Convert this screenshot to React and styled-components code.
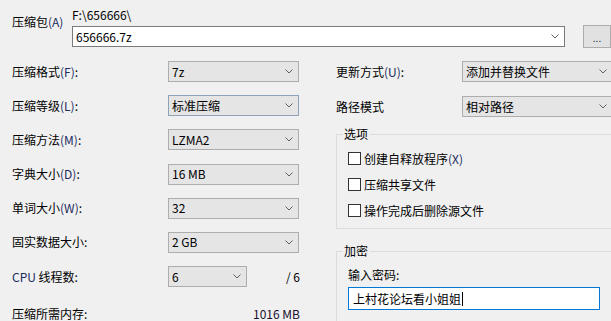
import React from "react";
import styled, { createGlobalStyle } from "styled-components";

const GlobalStyle = createGlobalStyle`
  html, body { margin: 0; padding: 0; background: #f0f0f0; }
  body {
    font-family: "Noto Sans CJK SC", "Noto Sans", sans-serif;
    font-size: 12px;
    line-height: 14px;
    color: #000;
  }
  * { box-sizing: border-box; }
`;

const Dialog = styled.div`
  width: 611px;
  height: 321px;
  overflow: hidden;
  padding: 8px 0 0 12px;
  background: #f0f0f0;
`;

const ArchiveSection = styled.div`
  display: grid;
  grid-template-columns: 60px 600px;
`;

const ArchiveLabel = styled.div`
  padding-top: 7px;
  white-space: nowrap;
`;

const PathText = styled.div`
  height: 17px;
  white-space: nowrap;
`;

const InputRow = styled.div`
  display: flex;
  align-items: center;
  gap: 18px;
`;

const NameInput = styled.div`
  width: 493px;
  height: 21px;
  flex: none;
  background: #fff;
  border: 1px solid #7a7a7a;
  display: flex;
  align-items: center;
  justify-content: space-between;
  padding: 0 5px 0 3px;
`;

const BrowseButton = styled.div`
  width: 28px;
  height: 23px;
  flex: none;
  background: #e1e1e1;
  border: 1px solid #adadad;
  display: flex;
  align-items: center;
  justify-content: center;
  font-size: 10px;
  line-height: 10px;
  padding-top: 2px;
  color: #202040;
`;

const Main = styled.div`
  display: grid;
  grid-template-columns: 288px 320px;
  column-gap: 36px;
  margin-top: 13px;
`;

const LeftColumn = styled.div`
  display: flex;
  flex-direction: column;
  gap: 13.2px;
`;

const FormRow = styled.div`
  display: grid;
  grid-template-columns: ${(p) => p.$labelWidth || 156}px ${(p) => p.$fieldWidth || 131}px 1fr;
  align-items: center;
  height: 21px;
  white-space: nowrap;
`;

const Label = styled.span`
  white-space: nowrap;
`;

const Mnemonic = styled.span`
  color: #1b2c5e;
`;

const Combo = styled.div`
  height: ${(p) => p.$height || 21}px;
  background: #e5e5e5;
  border: 1px solid ${(p) => (p.$focused ? "#8fa3b8" : "#adadad")};
  display: flex;
  align-items: center;
  justify-content: space-between;
  padding: 0 5px 0 3px;
  white-space: nowrap;
`;

const SideValue = styled.span`
  text-align: right;
`;

const MemoryRow = styled.div`
  display: flex;
  justify-content: space-between;
  align-items: center;
  height: 21px;
  margin-top: 3.5px;
  color: #000;
`;

const MemoryValue = styled.span`
  color: #1a0e2e;
`;

const RightColumn = styled.div`
  display: flex;
  flex-direction: column;
`;

const RightRows = styled.div`
  display: flex;
  flex-direction: column;
  gap: 14px;
`;

const GroupBox = styled.fieldset`
  margin: ${(p) => p.$top}px 0 0 0;
  padding: ${(p) => p.$padTop}px 0 ${(p) => p.$padBottom}px 11px;
  border: 1px solid #dcdcdc;
  min-width: 0;
`;

const GroupTitle = styled.legend`
  padding: 0 2px 0 1px;
  margin-left: -5px;
  line-height: 14px;
  font-size: 12px;
`;

const OptionList = styled.div`
  display: flex;
  flex-direction: column;
  gap: 13px;
`;

const OptionRow = styled.label`
  display: flex;
  align-items: center;
  height: 13px;
  gap: 3px;
  white-space: nowrap;
`;

const CheckBox = styled.span`
  width: 13px;
  height: 13px;
  flex: none;
  background: #fff;
  border: 1px solid #333;
`;

const PasswordLabel = styled.div`
  height: 14px;
`;

const PasswordInput = styled.div`
  margin-top: 5px;
  width: 252px;
  height: 23px;
  background: #fff;
  border: 1px solid #0078d7;
  display: flex;
  align-items: center;
  padding-left: 4px;
  white-space: nowrap;
`;

const Caret = styled.span`
  display: inline-block;
  width: 1px;
  height: 14px;
  background: #000;
  margin-left: 1px;
`;

const Chevron = () => (
  <svg width="8" height="5" viewBox="0 0 8 5" style={{ flex: "none" }}>
    <path d="M0.5 0.5 L4 4 L7.5 0.5" fill="none" stroke="#606060" strokeWidth="1" />
  </svg>
);

const leftRows = [
  { label: "压缩格式", key: "F", value: "7z" },
  { label: "压缩等级", key: "L", value: "标准压缩", focused: true },
  { label: "压缩方法", key: "M", value: "LZMA2" },
  { label: "字典大小", key: "D", value: "16 MB" },
  { label: "单词大小", key: "W", value: "32" },
  { label: "固实数据大小:", value: "2 GB" },
];

export default function App() {
  return (
    <>
      <GlobalStyle />
      <Dialog>
        <ArchiveSection>
          <ArchiveLabel>
            压缩包<Mnemonic>(A)</Mnemonic>
          </ArchiveLabel>
          <div>
            <PathText>F:\656666\</PathText>
            <InputRow>
              <NameInput>
                <span>656666.7z</span>
                <Chevron />
              </NameInput>
              <BrowseButton>...</BrowseButton>
            </InputRow>
          </div>
        </ArchiveSection>

        <Main>
          <LeftColumn>
            {leftRows.map((r) => (
              <FormRow key={r.label}>
                <Label>
                  {r.label}
                  {r.key && (
                    <>
                      <Mnemonic>({r.key})</Mnemonic>:
                    </>
                  )}
                </Label>
                <Combo $focused={r.focused}>
                  <span>{r.value}</span>
                  <Chevron />
                </Combo>
              </FormRow>
            ))}
            <FormRow $fieldWidth={79}>
              <Label>
                <Mnemonic>CPU</Mnemonic> 线程数:
              </Label>
              <Combo>
                <span>6</span>
                <Chevron />
              </Combo>
              <SideValue>/ 6</SideValue>
            </FormRow>
            <MemoryRow>
              <Label>压缩所需内存:</Label>
              <MemoryValue>1016 MB</MemoryValue>
            </MemoryRow>
          </LeftColumn>

          <RightColumn>
            <RightRows>
              <FormRow $labelWidth={126} $fieldWidth={151}>
                <Label>
                  更新方式<Mnemonic>(U)</Mnemonic>:
                </Label>
                <Combo>
                  <span>添加并替换文件</span>
                  <Chevron />
                </Combo>
              </FormRow>
              <FormRow $labelWidth={126} $fieldWidth={151}>
                <Label>路径模式</Label>
                <Combo>
                  <span>相对路径</span>
                  <Chevron />
                </Combo>
              </FormRow>
            </RightRows>

            <GroupBox $top={10} $padTop={11} $padBottom={11}>
              <GroupTitle>选项</GroupTitle>
              <OptionList>
                <OptionRow>
                  <CheckBox />
                  <span>
                    创建自释放程序<Mnemonic>(X)</Mnemonic>
                  </span>
                </OptionRow>
                <OptionRow>
                  <CheckBox />
                  <span>压缩共享文件</span>
                </OptionRow>
                <OptionRow>
                  <CheckBox />
                  <span>操作完成后删除源文件</span>
                </OptionRow>
              </OptionList>
            </GroupBox>

            <GroupBox $top={15} $padTop={10} $padBottom={40}>
              <GroupTitle>加密</GroupTitle>
              <PasswordLabel>输入密码:</PasswordLabel>
              <PasswordInput>
                <span>上村花论坛看小姐姐</span>
                <Caret />
              </PasswordInput>
            </GroupBox>
          </RightColumn>
        </Main>
      </Dialog>
    </>
  );
}
